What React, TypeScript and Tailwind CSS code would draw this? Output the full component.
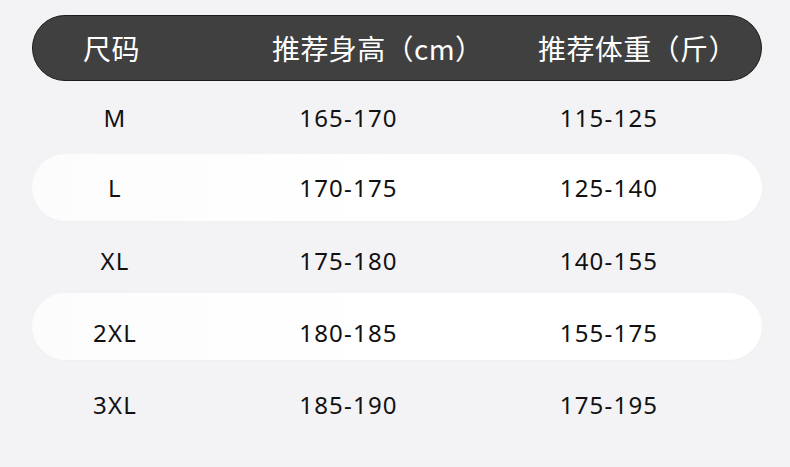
import React from "react";

const rows = [
  { s: "M", h: "165-170", w: "115-125", white: false, cls: "h-[73px]" },
  { s: "L", h: "170-175", w: "125-140", white: true, cls: "h-[67px]" },
  { s: "XL", h: "175-180", w: "140-155", white: false, cls: "h-[72px] pt-[8px]" },
  { s: "2XL", h: "180-185", w: "155-175", white: true, cls: "h-[67px] pt-[12px]" },
  { s: "3XL", h: "185-190", w: "175-195", white: false, cls: "h-[72px] pt-[18px]" },
];

export default function App() {
  return (
    <div className="w-[790px] h-[467px] bg-[#f3f3f6] overflow-hidden">
      <div className="pt-[15px] pl-[32px] w-[762px] flex flex-col">
        <div
          className="h-[66px] w-[730px] rounded-full bg-[#404040] border border-[#1c1c1c] flex items-center text-white text-[28px] tracking-[0.4px]"
          style={{ fontFamily: '"Noto Sans CJK SC", "Noto Sans", sans-serif' }}
        >
          <div className="w-[239px] pl-[50px]">尺码</div>
          <div className="w-[266px]">推荐身高（cm）</div>
          <div className="flex-1">推荐体重（斤）</div>
        </div>
        {rows.map((r) => (
          <div
            key={r.s}
            className={`${r.cls} w-[730px] flex items-center text-[#111111] text-[24px] tracking-[1.2px] ${
              r.white
                ? "rounded-full bg-gradient-to-r from-[#fcfcfd] via-white to-white shadow-[0_1px_2px_rgba(0,0,0,0.02)]"
                : ""
            }`}
            style={{ fontFamily: '"Noto Sans", "Open Sans", sans-serif' }}
          >
            <div className="w-[166px] text-center">{r.s}</div>
            <div className="w-[301px] text-center">{r.h}</div>
            <div className="w-[220px] text-center">{r.w}</div>
          </div>
        ))}
      </div>
    </div>
  );
}
